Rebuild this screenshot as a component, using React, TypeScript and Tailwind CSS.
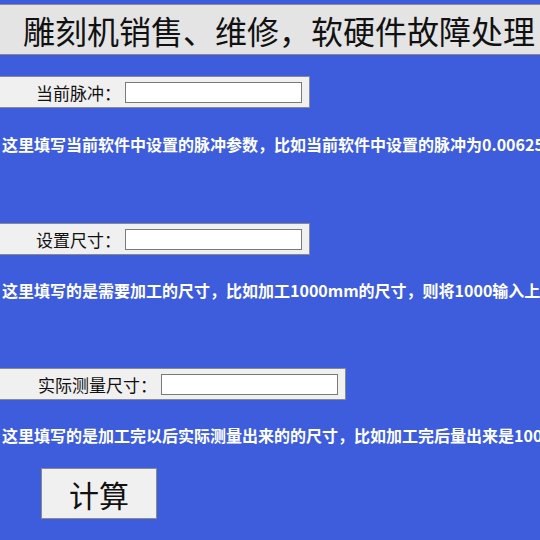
import React from 'react';

const cjk = "font-['Noto_Sans_CJK_SC','Noto_Sans',sans-serif]";

function FieldRow({ label, width, mt }: { label: string; width: string; mt: string }) {
  return (
    <div
      className={`${mt} ${width} h-[32px] flex items-center justify-end pr-[7px] bg-[#f0f0f0] border border-l-0 border-[#8a8a8a]`}
    >
      <span className="text-[17px] leading-none text-[#111] mr-[4px]">{label}</span>
      <input className="w-[177px] h-[21px] bg-white border border-[#7a7a7a] outline-none" />
    </div>
  );
}

function Hint({ text, mt }: { text: string; mt: string }) {
  return (
    <p className={`${mt} pl-[2px] text-[16px] leading-[22px] font-bold text-white whitespace-nowrap`}>
      {text}
    </p>
  );
}

export default function App() {
  return (
    <div className={`w-[540px] h-[540px] overflow-hidden bg-[#3d5ddc] ${cjk}`}>
      <div className="pt-[4px]">
        <div className="h-[51px] w-[560px] flex items-center bg-[#e4e4e4] border-y border-[#8a8a8a] pl-[23px] whitespace-nowrap">
          <span className="text-[32px] leading-none text-[#111]">雕刻机销售、维修，软硬件故障处理 及技术支持</span>
        </div>
      </div>

      <FieldRow label="当前脉冲：" width="w-[310px]" mt="mt-[21px]" />
      <Hint mt="mt-[25px]" text="这里填写当前软件中设置的脉冲参数，比如当前软件中设置的脉冲为0.00625，则输入0.00625" />

      <FieldRow label="设置尺寸：" width="w-[310px]" mt="mt-[68px]" />
      <Hint mt="mt-[24px]" text="这里填写的是需要加工的尺寸，比如加工1000mm的尺寸，则将1000输入上面" />

      <FieldRow label="实际测量尺寸：" width="w-[346px]" mt="mt-[67px]" />
      <Hint mt="mt-[24px]" text="这里填写的是加工完以后实际测量出来的的尺寸，比如加工完后量出来是1000.5" />

      <div className="mt-[22px] pl-[41px]">
        <button className="w-[116px] h-[51px] bg-[#f0f0f0] border border-[#8a8a8a] text-[30px] leading-none text-[#111]">
          计算
        </button>
      </div>
    </div>
  );
}
